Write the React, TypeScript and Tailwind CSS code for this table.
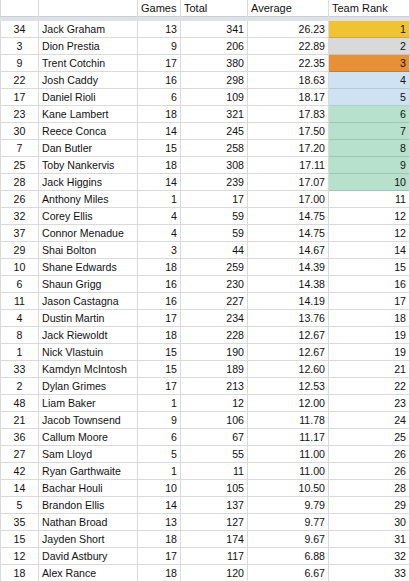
const rows: [number, string, number, number, string, number][] = [
  [34, "Jack Graham", 13, 341, "26.23", 1],
  [3, "Dion Prestia", 9, 206, "22.89", 2],
  [9, "Trent Cotchin", 17, 380, "22.35", 3],
  [22, "Josh Caddy", 16, 298, "18.63", 4],
  [17, "Daniel Rioli", 6, 109, "18.17", 5],
  [23, "Kane Lambert", 18, 321, "17.83", 6],
  [30, "Reece Conca", 14, 245, "17.50", 7],
  [7, "Dan Butler", 15, 258, "17.20", 8],
  [25, "Toby Nankervis", 18, 308, "17.11", 9],
  [28, "Jack Higgins", 14, 239, "17.07", 10],
  [26, "Anthony Miles", 1, 17, "17.00", 11],
  [32, "Corey Ellis", 4, 59, "14.75", 12],
  [37, "Connor Menadue", 4, 59, "14.75", 12],
  [29, "Shai Bolton", 3, 44, "14.67", 14],
  [10, "Shane Edwards", 18, 259, "14.39", 15],
  [6, "Shaun Grigg", 16, 230, "14.38", 16],
  [11, "Jason Castagna", 16, 227, "14.19", 17],
  [4, "Dustin Martin", 17, 234, "13.76", 18],
  [8, "Jack Riewoldt", 18, 228, "12.67", 19],
  [1, "Nick Vlastuin", 15, 190, "12.67", 19],
  [33, "Kamdyn McIntosh", 15, 189, "12.60", 21],
  [2, "Dylan Grimes", 17, 213, "12.53", 22],
  [48, "Liam Baker", 1, 12, "12.00", 23],
  [21, "Jacob Townsend", 9, 106, "11.78", 24],
  [36, "Callum Moore", 6, 67, "11.17", 25],
  [27, "Sam Lloyd", 5, 55, "11.00", 26],
  [42, "Ryan Garthwaite", 1, 11, "11.00", 26],
  [14, "Bachar Houli", 10, 105, "10.50", 28],
  [5, "Brandon Ellis", 14, 137, "9.79", 29],
  [35, "Nathan Broad", 13, 127, "9.77", 30],
  [15, "Jayden Short", 18, 174, "9.67", 31],
  [12, "David Astbury", 17, 117, "6.88", 32],
  [18, "Alex Rance", 18, 120, "6.67", 33],
];

// team rank highlight colours
function rankClass(i: number) {
  if (i === 0) return "bg-[#f1c232] border-b-[#d4a82a]";
  if (i === 1) return "bg-[#d9d9d9] border-b-[#c4c4c4]";
  if (i === 2) return "bg-[#e69138] border-b-[#c97c2f]";
  if (i < 5) return "bg-[#cfe2f3] border-b-[#b3c9dc]";
  if (i < 10) return "bg-[#b7e1cd] border-b-[#9cc7b2]";
  return "bg-white border-b-[#dadada]";
}

const grid = "grid grid-cols-[38px_99px_43px_67px_81px_81px] border-l border-[#dadada]";
const cell = "border-r border-b border-[#dadada] px-[3px] leading-[16px] whitespace-nowrap overflow-hidden";
const head = "border-r border-[#dadada] px-[3px] leading-[17px] text-[11px] text-[#111]";

export default function App() {
  return (
    <div className="w-[410px] h-[581px] overflow-hidden bg-white text-[#111] text-[10.6px] font-['Liberation_Sans',Arial,sans-serif]">
      <div className={grid + " h-[16px]"}>
        <div className="border-r border-[#dadada]" />
        <div className="border-r border-[#dadada]" />
        <div className={head}>Games</div>
        <div className={head}>Total</div>
        <div className={head}>Average</div>
        <div className={head}>Team Rank</div>
      </div>
      <div className="h-[5px] bg-[#dde1e8] border-t border-[#c9ced8]" />
      {rows.map((r, i) => (
        <div key={i} className={grid + " h-[17px]"}>
          <div className={cell + " text-center"}>{r[0]}</div>
          <div className={cell}>{r[1]}</div>
          <div className={cell + " text-right"}>{r[2]}</div>
          <div className={cell + " text-right"}>{r[3]}</div>
          <div className={cell + " text-right"}>{r[4]}</div>
          <div className={cell + " text-right " + rankClass(i)}>{r[5]}</div>
        </div>
      ))}
    </div>
  );
}
